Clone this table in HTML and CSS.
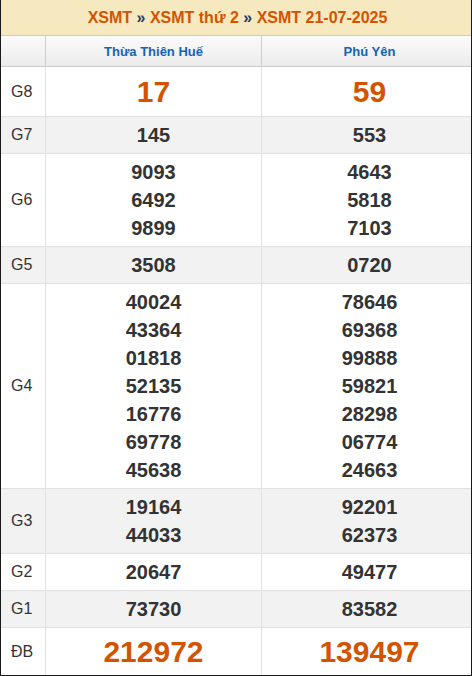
FILE: index.html
```html
<!DOCTYPE html>
<html lang="vi">
<head>
<meta charset="utf-8">
<title>XSMT 21-07-2025</title>
<link rel="stylesheet" href="styles.css">
</head>
<body>
<div class="board">
  <div class="title">
    <span class="crumb">XSMT</span> <span class="sep">»</span> <span class="crumb">XSMT thứ 2</span> <span class="sep">»</span> <span class="crumb">XSMT 21-07-2025</span>
  </div>
  <div class="row head">
    <div class="cell label"></div>
    <div class="cell prov">Thừa Thiên Huế</div>
    <div class="cell prov last">Phú Yên</div>
  </div>
  <div class="row big g8">
    <div class="cell label">G8</div>
    <div class="cell num"><span>17</span></div>
    <div class="cell num last"><span>59</span></div>
  </div>
  <div class="row alt">
    <div class="cell label">G7</div>
    <div class="cell num"><span>145</span></div>
    <div class="cell num last"><span>553</span></div>
  </div>
  <div class="row">
    <div class="cell label">G6</div>
    <div class="cell num"><span>9093</span><span>6492</span><span>9899</span></div>
    <div class="cell num last"><span>4643</span><span>5818</span><span>7103</span></div>
  </div>
  <div class="row alt">
    <div class="cell label">G5</div>
    <div class="cell num"><span>3508</span></div>
    <div class="cell num last"><span>0720</span></div>
  </div>
  <div class="row">
    <div class="cell label">G4</div>
    <div class="cell num"><span>40024</span><span>43364</span><span>01818</span><span>52135</span><span>16776</span><span>69778</span><span>45638</span></div>
    <div class="cell num last"><span>78646</span><span>69368</span><span>99888</span><span>59821</span><span>28298</span><span>06774</span><span>24663</span></div>
  </div>
  <div class="row alt">
    <div class="cell label">G3</div>
    <div class="cell num"><span>19164</span><span>44033</span></div>
    <div class="cell num last"><span>92201</span><span>62373</span></div>
  </div>
  <div class="row">
    <div class="cell label">G2</div>
    <div class="cell num"><span>20647</span></div>
    <div class="cell num last"><span>49477</span></div>
  </div>
  <div class="row alt">
    <div class="cell label">G1</div>
    <div class="cell num"><span>73730</span></div>
    <div class="cell num last"><span>83582</span></div>
  </div>
  <div class="row big db">
    <div class="cell label">ĐB</div>
    <div class="cell num"><span>212972</span></div>
    <div class="cell num last"><span>139497</span></div>
  </div>
</div>
</body>
</html>
```

FILE: styles.css
```css
html, body {
  margin: 0;
  padding: 0;
  background: #ffffff;
}
body {
  font-family: "Liberation Sans", Arial, sans-serif;
  color: #333333;
}
.board {
  width: 472px;
  height: 676px;
  box-sizing: border-box;
  border-left: 1px solid #1a1a1a;
  border-right: 1px solid #1a1a1a;
  border-bottom: 1px solid #1a1a1a;
  overflow: hidden;
}
.title {
  height: 35px;
  line-height: 35px;
  padding-left: 3px;
  background: #f6e8bf;
  border-bottom: 1px solid #d2cdbd;
  text-align: center;
  font-size: 16px;
  font-weight: bold;
  color: #d35400;
  white-space: nowrap;
}
.title .sep {
  color: #1b3a6e;
}
.row {
  display: grid;
  grid-template-columns: 44px 216px 1fr;
  border-bottom: 1px solid #e1e1e1;
}
.row.alt {
  background: #f2f2f2;
}
.cell {
  display: flex;
  flex-direction: column;
  align-items: center;
  justify-content: center;
  padding: 4px 0;
}
.cell + .cell {
  border-left: 1px solid #e1e1e1;
}
.row .cell.last {
  padding-left: 6px;
}
.row .cell.label {
  align-items: flex-start;
  padding-left: 10px;
  font-size: 16px;
  color: #333333;
}
.num span {
  display: block;
  font-size: 20px;
  line-height: 28px;
  font-weight: bold;
  color: #333333;
}
.head {
  height: 30px;
  background: linear-gradient(#fbfbfb, #ebebeb);
  border-bottom: 1px solid #cccccc;
}
.head .cell {
  padding-top: 0;
  padding-bottom: 0;
}
.head .cell + .cell {
  border-left: 1px solid #cccccc;
}
.prov {
  font-size: 13px;
  font-weight: bold;
  color: #1563b5;
}
.big .num span {
  font-size: 30px;
  line-height: 41px;
  color: #d35400;
}
.g8 {
  height: 49px;
}
.g8 .cell,
.db .cell {
  padding-top: 0;
  padding-bottom: 0;
}
.db {
  height: 47px;
  border-bottom: none;
}
```
